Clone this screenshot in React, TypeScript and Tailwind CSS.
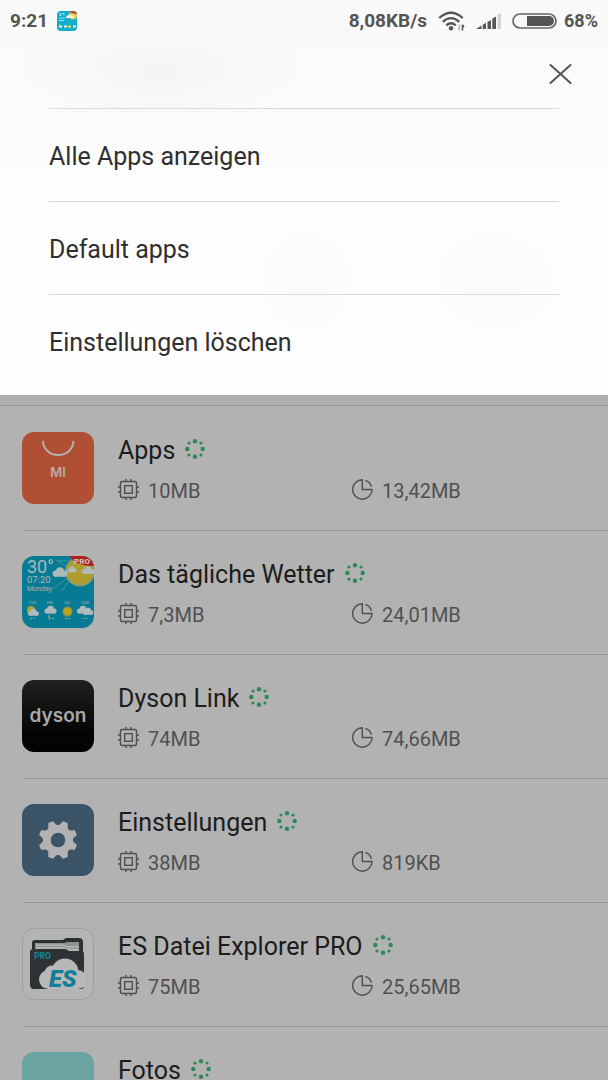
import type { ReactNode } from 'react';

type AppEntry = {
  name: string;
  memory: string;
  storage: string;
  icon: ReactNode;
};

const menuItems = ['Alle Apps anzeigen', 'Default apps', 'Einstellungen löschen'];

function StoreIcon() {
  return (
    <svg viewBox="0 0 72 72" className="w-full h-full" aria-hidden="true">
      <rect width="72" height="72" fill="#b04f33" />
      <path d="M21 9a15.2 14 0 0 0 30.4 0" fill="none" stroke="#b4b0ae" strokeWidth="2" />
      <text x="36" y="44.5" textAnchor="middle" fontFamily="Inter, sans-serif" fontSize="13" fontWeight="600" fill="#b9aca7">
        MI
      </text>
    </svg>
  );
}

function Cloud({ x, y, scale }: { x: number; y: number; scale: number }) {
  return (
    <g transform={`translate(${x} ${y}) scale(${scale})`} fill="#afbabd">
      <circle cx="-4" cy="0.5" r="2.8" />
      <circle cx="0" cy="-1.5" r="3.8" />
      <circle cx="4" cy="0.5" r="2.8" />
      <rect x="-6" y="0" width="12" height="3.3" rx="1.6" />
    </g>
  );
}

function WeatherIcon() {
  return (
    <svg viewBox="0 0 72 72" className="w-full h-full" fontFamily="Roboto, sans-serif" aria-hidden="true">
      <rect width="72" height="72" fill="#087b94" />
      <path d="M34 4l12 8M31 33l14-11M40 35l8-11M36 5h10" stroke="#4f9aa8" strokeWidth="0.8" />
      <circle cx="58" cy="15.5" r="15" fill="#8d9b6c" />
      <circle cx="58" cy="15.5" r="13" fill="#b09d2d" />
      <Cloud x={38} y={17} scale={1.1} />
      <Cloud x={50} y={14} scale={0.7} />
      <Cloud x={66} y={15} scale={0.9} />
      <path d="M47 0h25v10c-8 0-18-2-21-6z" fill="#b0201b" />
      <text x="52" y="7.5" fontSize="8" fontWeight="900" fill="#c7c0bf">PRO</text>
      <text x="5" y="17" fontSize="18" fill="#a9b8bb">30°</text>
      <text x="5" y="27" fontSize="9.5" fill="#a4b7bb">07:20</text>
      <text x="5" y="35" fontSize="7" fill="#9db5ba">Monday</text>
      <g fontSize="4" fill="#9db5ba" textAnchor="middle">
        <text x="10.5" y="48">THU</text>
        <text x="28" y="48">FRI</text>
        <text x="45.5" y="48">SAT</text>
        <text x="63" y="48">SUN</text>
      </g>
      <circle cx="9" cy="54" r="4" fill="#b3a02b" />
      <Cloud x={11.5} y={57} scale={0.8} />
      <Cloud x={28.5} y={54.5} scale={0.9} />
      <path d="M28 58l-2 3h2l-1 3" fill="none" stroke="#a8a875" strokeWidth="0.8" />
      <circle cx="45.5" cy="55.5" r="5.2" fill="#5d8d62" />
      <circle cx="45.5" cy="55.5" r="4.2" fill="#b8a41f" />
      <Cloud x={61} y={54.5} scale={0.9} />
      <Cloud x={66} y={56} scale={0.8} />
      <path d="M8 62.5h5M27 62.5h5M43 62.5h5M60.5 62.5h5" stroke="#7ba9b1" strokeWidth="1" strokeDasharray="2 1" />
    </svg>
  );
}

function DysonIcon() {
  return (
    <svg viewBox="0 0 72 72" className="w-full h-full" aria-hidden="true">
      <defs>
        <linearGradient id="dyson-bg" x1="0" y1="0" x2="0" y2="1">
          <stop offset="0" stopColor="#202020" />
          <stop offset="0.75" stopColor="#040404" />
          <stop offset="1" stopColor="#020202" />
        </linearGradient>
      </defs>
      <rect width="72" height="72" fill="url(#dyson-bg)" />
      <text x="36" y="42" textAnchor="middle" fontFamily="Inter, sans-serif" fontSize="19" fontWeight="600" fill="#a8a8a8">
        dyson
      </text>
    </svg>
  );
}

function SettingsIcon() {
  return (
    <svg viewBox="0 0 72 72" className="w-full h-full" aria-hidden="true">
      <rect width="72" height="72" fill="#3c5467" />
      <g fill="#b2b2b2" transform="translate(36 36)">
        <circle r="15" />
        {[22.5, 67.5, 112.5, 157.5, 202.5, 247.5, 292.5, 337.5].map((angle) => (
          <path
            key={angle}
            transform={`rotate(${angle})`}
            d="M-5.6 -13 Q-3.6 -15 -3.2 -18 Q-3 -19.4 -1.8 -19.4 H1.8 Q3 -19.4 3.2 -18 Q3.6 -15 5.6 -13z"
          />
        ))}
      </g>
      <circle cx="36" cy="36" r="7.3" fill="#3c5467" />
    </svg>
  );
}

function ExplorerIcon() {
  return (
    <svg viewBox="0 0 72 72" className="w-full h-full" fontFamily="Roboto, sans-serif" aria-hidden="true">
      <rect x="0.5" y="0.5" width="71" height="71" rx="12" fill="#b4b4b4" stroke="#999" strokeWidth="0.8" />
      <path d="M10 30V15q0-3 3-3h28l3-2h13q4 0 4 4v20H10z" fill="#2c3134" />
      <path d="M13 15h29l3-1h12v8H13z" fill="#8f9292" />
      <path d="M14 16.5h28l3 1.5h12v5H14z" fill="#b5b5b5" />
      <path d="M14 18.5h28l3 1.5h12" fill="none" stroke="#6f7373" strokeWidth="0.6" />
      <path d="M8 24q0-3 3-3h33l3 2h12q3 0 3 3v31q0 4-3 4H12q-4 0-4-4z" fill="#2d3235" />
      <g fill="#b8b8b8">
        <circle cx="26.5" cy="51.5" r="9.5" />
        <circle cx="30" cy="45" r="7.5" />
        <circle cx="43" cy="44" r="13.5" />
        <circle cx="55.5" cy="51.5" r="9.5" />
        <rect x="26" y="48" width="30" height="13" />
      </g>
      <text x="12" y="31" fontSize="8.5" fontWeight="700" fill="#1687a0">PRO</text>
      <text x="27" y="59" fontSize="24" fontWeight="900" fontStyle="italic" fill="#117f97">ES</text>
    </svg>
  );
}

function PhotosIcon() {
  return (
    <svg viewBox="0 0 72 72" className="w-full h-full" aria-hidden="true">
      <rect width="72" height="72" fill="#6aa39f" />
    </svg>
  );
}

const apps: AppEntry[] = [
  { name: 'Apps', memory: '10MB', storage: '13,42MB', icon: <StoreIcon /> },
  { name: 'Das tägliche Wetter', memory: '7,3MB', storage: '24,01MB', icon: <WeatherIcon /> },
  { name: 'Dyson Link', memory: '74MB', storage: '74,66MB', icon: <DysonIcon /> },
  { name: 'Einstellungen', memory: '38MB', storage: '819KB', icon: <SettingsIcon /> },
  { name: 'ES Datei Explorer PRO', memory: '75MB', storage: '25,65MB', icon: <ExplorerIcon /> },
  { name: 'Fotos', memory: '', storage: '', icon: <PhotosIcon /> },
];

function RunningDots() {
  return (
    <svg viewBox="0 0 20 20" className="mb-[5px] size-5 shrink-0" fill="#2c8955" aria-hidden="true">
      <circle cx="10" cy="2.3" r="2.2" />
      <circle cx="17.7" cy="10" r="2.2" />
      <circle cx="10" cy="17.7" r="2.2" />
      <circle cx="2.3" cy="10" r="2.2" />
      <circle cx="4" cy="4" r="1.6" />
      <circle cx="16" cy="4" r="1.6" />
      <circle cx="16" cy="16" r="1.6" />
      <circle cx="4" cy="16" r="1.6" />
    </svg>
  );
}

function ChipIcon() {
  return (
    <svg viewBox="0 0 22 22" className="mb-[3px] size-[22px] shrink-0" fill="none" stroke="#505050" strokeWidth="1.4" aria-hidden="true">
      <rect x="2.5" y="2.5" width="16" height="16" rx="1.5" />
      <rect x="6.7" y="6.7" width="7.6" height="7.6" />
      <path d="M8 0V2.5M13 0V2.5M8 18.5V21M13 18.5V21M0 8H2.5M0 13H2.5M18.5 8H21M18.5 13H21" />
    </svg>
  );
}

function PieIcon() {
  return (
    <svg viewBox="0 0 22 22" className="mb-[3px] size-[22px] shrink-0" fill="none" stroke="#505050" strokeWidth="1.4" aria-hidden="true">
      <path d="M10.3 .8A9.7 9.7 0 1 0 20 10.5H10.3z" />
      <path d="M13.3 1.3A9.7 9.7 0 0 1 19.5 7.7" />
    </svg>
  );
}

function StatusBar() {
  return (
    <div className="flex h-[42px] items-center justify-between px-[10px] text-[19px] font-bold text-[#555]">
      <div className="flex items-center gap-[9px]">
        <span>9:21</span>
        <div className="size-5 overflow-hidden rounded-[4px]">
          <svg viewBox="0 0 20 20" className="size-5" aria-hidden="true">
            <rect width="20" height="20" fill="#13aecd" />
            <circle cx="16" cy="4.5" r="4" fill="#e8c95a" />
            <path d="M13 0h7v3l-6-1z" fill="#b9432f" />
            <path d="M9 6.5q0-2 2-2 1-2 3 0 2-1 3 1v1.5H9z" fill="#f4f1ea" />
            <path d="M2 2.5h2v2H2m3-2h2v2M2 7h6M2 9.5h5" fill="none" stroke="#9fdbe7" strokeWidth="1" />
            <path d="M2 15.5h3M7 15.5h3M16 15.5h3" stroke="#e5f5f8" strokeWidth="2" />
            <circle cx="12.5" cy="15.5" r="1.5" fill="#f0d53f" />
            <circle cx="2.8" cy="14.5" r="1" fill="#f0d53f" />
          </svg>
        </div>
      </div>
      <div className="flex items-center gap-[11px]">
        <span>8,08KB/s</span>
        <svg viewBox="0 0 27 21" className="h-[21px] w-[27px]" fill="none" stroke="#555" aria-hidden="true">
          <path d="M1.2 7q11.8-10.5 23.6 0" strokeWidth="2.3" />
          <path d="M4.8 10.8q8.2-7.3 16.4 0" strokeWidth="2.3" />
          <path d="M8.3 14.3q4.7-4.2 9.4 0" strokeWidth="2.3" />
          <circle cx="13" cy="17.2" r="2.2" fill="#555" stroke="none" />
          <path d="M21.5 13.5v6M20.5 17l1 2" stroke="#bbb" strokeWidth="1.5" />
          <path d="M24.5 13.5v6M24.5 14l1.5 2" strokeWidth="1.5" />
        </svg>
        <svg viewBox="0 0 25 16" className="h-4 w-[25px]" fill="#555" aria-hidden="true">
          <path d="M0 16l5.5-3.5V16zM6.8 11.8l3.2-2V16H6.8zM11.5 9l3.5-2v9h-3.5zM16.3 5.5l3.7-2V16h-3.7z" />
          <path d="M21.5 2L25 0v16h-3.5z" fill="#d2d2d2" />
        </svg>
        <div className="flex items-center gap-[7px]">
          <svg viewBox="0 0 45 16" className="h-4 w-[45px]" aria-hidden="true">
            <rect x="1" y="1" width="43" height="14" rx="7" fill="none" stroke="#666" strokeWidth="1.7" />
            <path d="M15 3h22a5 5 0 0 1 0 10H15z" fill="#555" />
          </svg>
          <span className="text-lg">68%</span>
        </div>
      </div>
    </div>
  );
}

function OptionsMenu() {
  return (
    <header className="shrink-0 bg-[radial-gradient(ellipse_150px_55px_at_160px_72px,#f5f5f5,transparent),radial-gradient(ellipse_60px_70px_at_306px_285px,#fbfbfb,transparent),radial-gradient(ellipse_80px_70px_at_495px_285px,#fbfbfb,transparent),linear-gradient(#f9f9f9,#fdfdfd_45%,#fefefe)] pb-2">
      <StatusBar />
      <div className="flex h-[66px] items-center justify-end pr-8 pb-[2px]">
        <button type="button" aria-label="Schließen" className="p-1">
          <svg viewBox="0 0 24 24" className="size-6" fill="none" stroke="#555" strokeWidth="2" strokeLinecap="round" aria-hidden="true">
            <path d="M2.5 3l20 18M22.5 3l-20 18" />
          </svg>
        </button>
      </div>
      <nav className="px-[49px]">
        {menuItems.map((item) => (
          <button
            key={item}
            type="button"
            className="block h-[93px] w-full border-t border-[#d9d9d9] pt-[3px] text-left text-[25px] leading-8 text-[#2f2f2f]"
          >
            {item}
          </button>
        ))}
      </nav>
    </header>
  );
}

function AppRow({ app }: { app: AppEntry }) {
  return (
    <li className="group pl-[22px]">
      <button type="button" className="relative flex h-[124px] w-full items-start gap-6 pt-[26px] text-left">
        <span className="absolute top-0 right-0 left-[2px] h-px bg-[#959595] group-first:hidden" />
        <span className="block size-[72px] shrink-0 overflow-hidden rounded-xl">{app.icon}</span>
        <span className="block min-w-0 flex-1">
          <span className="flex items-center gap-[10px] pt-[3px] text-[25px] leading-8 text-[#1c1c1c]">
            {app.name}
            <RunningDots />
          </span>
          {app.memory && (
            <span className="grid grid-cols-[234px_1fr] pt-[10px] text-xl leading-7 text-[#505050]">
              <span className="flex items-center gap-2">
                <ChipIcon />
                {app.memory}
              </span>
              <span className="flex items-center gap-2">
                <PieIcon />
                {app.storage}
              </span>
            </span>
          )}
        </span>
      </button>
    </li>
  );
}

export default function App() {
  return (
    <div className="flex h-screen flex-col overflow-hidden bg-[#b2b2b2] font-['Roboto',sans-serif]">
      <OptionsMenu />
      <main className="min-h-0 flex-1 overflow-hidden">
        <div className="h-[11px] border-b border-[#959595] bg-[#afafaf]" />
        <ul>
          {apps.map((app) => (
            <AppRow key={app.name} app={app} />
          ))}
        </ul>
      </main>
    </div>
  );
}
